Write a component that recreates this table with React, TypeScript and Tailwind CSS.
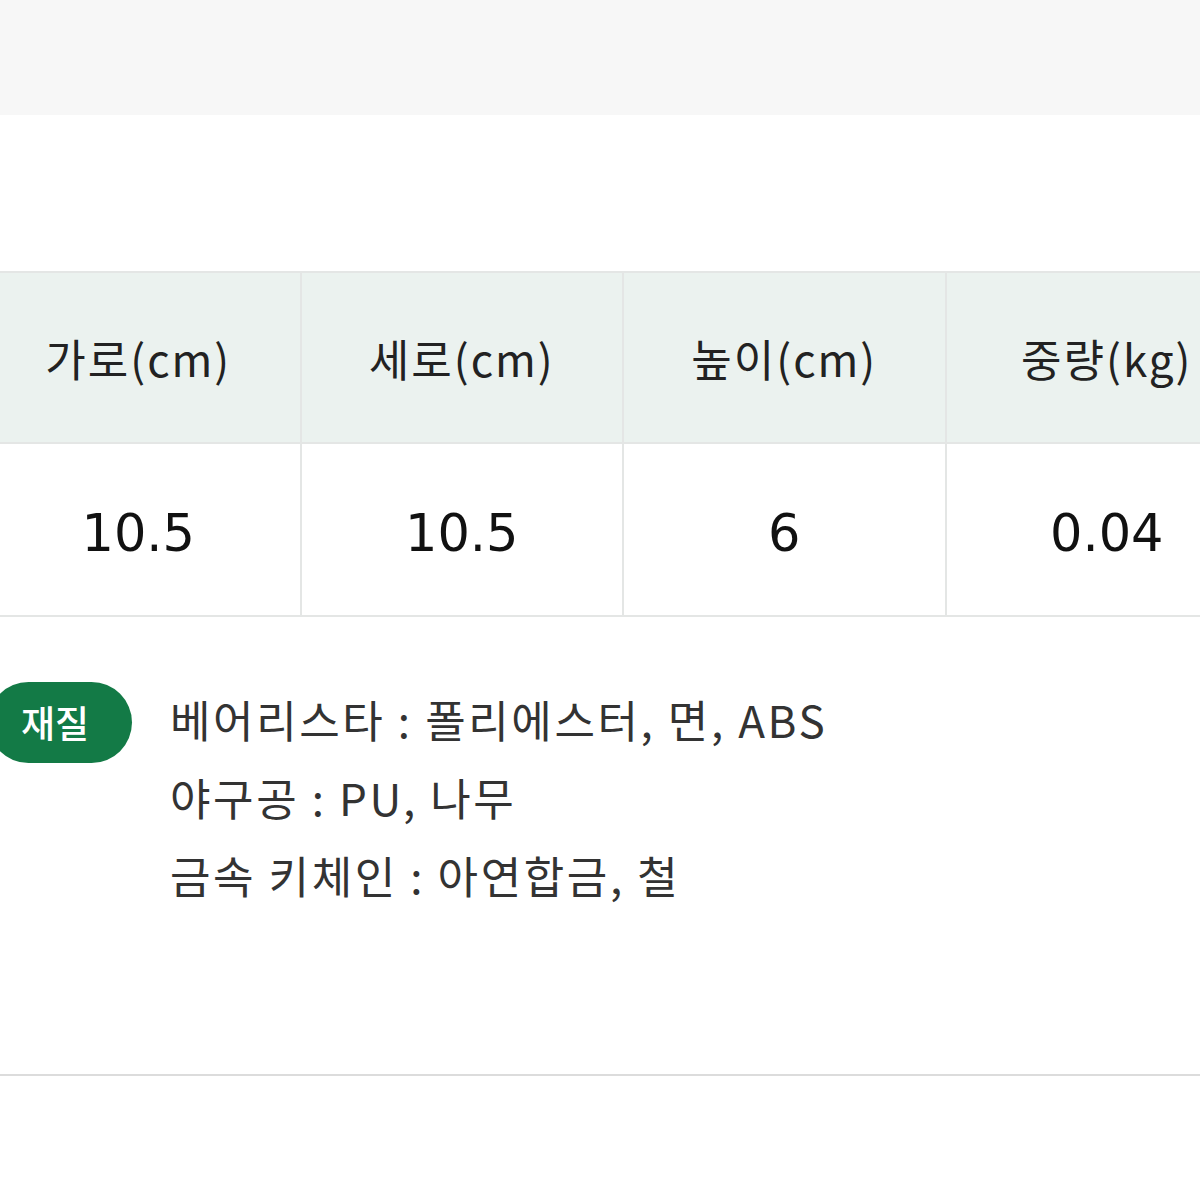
const font = { fontFamily: '"Noto Sans CJK KR", "Noto Sans", sans-serif' };
const numFont = { fontFamily: '"DejaVu Sans", "Noto Sans", sans-serif' };

const specs = [
  { label: "가로(cm)", value: "10.5" },
  { label: "세로(cm)", value: "10.5" },
  { label: "높이(cm)", value: "6" },
  { label: "중량(kg)", value: "0.04" },
];

const materials = [
  "베어리스타 : 폴리에스터, 면, ABS",
  "야구공 : PU, 나무",
  "금속 키체인 : 아연합금, 철",
];

export default function App() {
  return (
    <div
      className="w-[1200px] h-[1200px] overflow-hidden bg-white"
      style={font}
    >
      <div className="h-[115px] bg-[#f7f7f7]" />

      <div className="h-[156px]" />

      {/* size table */}
      <div className="-ml-[23px] w-[1290px] grid grid-cols-4 border-t-2 border-b-2 border-[#e4e6e5]">
        {specs.map((s, i) => (
          <div
            key={s.label}
            className={
              i > 0
                ? "flex flex-col border-l-2 border-[#e4e6e5]"
                : "flex flex-col"
            }
          >
            <div className="h-[171px] flex items-center justify-center bg-[#ebf2ef] border-b-2 border-[#e4e6e5] text-[44px] text-[#222] tracking-[2px]">
              {s.label}
            </div>
            <div
              className="h-[171px] flex items-center justify-center pt-[10px] text-[51px] text-[#111]"
              style={numFont}
            >
              {s.value}
            </div>
          </div>
        ))}
      </div>

      {/* material */}
      <div className="flex items-start mt-[63px]">
        <div className="-ml-[12px] w-[144px] h-[81px] rounded-full bg-[#137a46] flex items-center justify-center pr-[10px] mt-[2px]">
          <span className="text-white text-[37px] font-medium">재질</span>
        </div>
        <div className="ml-[38px] flex flex-col">
          {materials.map((m) => (
            <div
              key={m}
              className="h-[78px] leading-[78px] text-[44px] text-[#333] tracking-[2.6px]"
            >
              {m}
            </div>
          ))}
        </div>
      </div>

      <div className="mt-[160px] h-[2px] bg-[#dcdcdc]" />
    </div>
  );
}
